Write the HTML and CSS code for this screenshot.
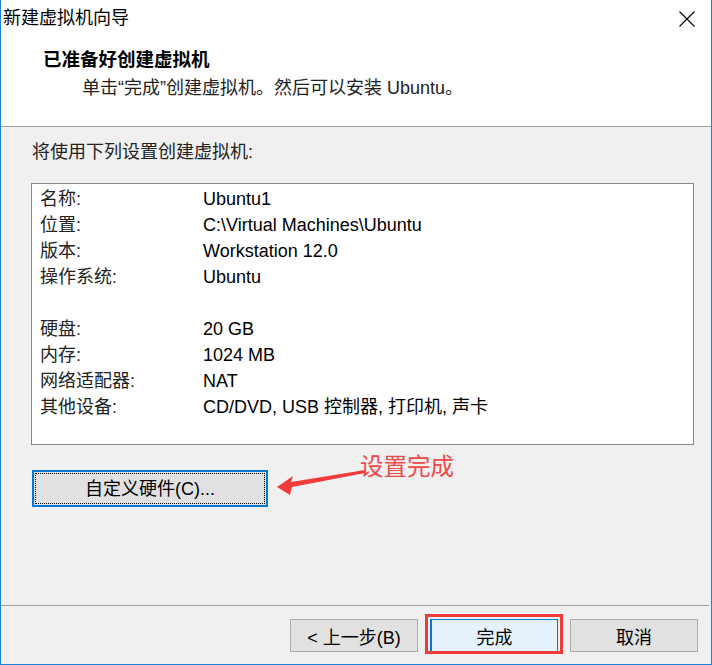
FILE: index.html
```html
<!DOCTYPE html>
<html lang="zh-CN">
<head>
<meta charset="utf-8">
<title>新建虚拟机向导</title>
<link rel="stylesheet" href="styles.css">
</head>
<body>
<div class="window">
  <div class="titlebar">
    <span class="title">新建虚拟机向导</span>
    <svg class="close" width="16" height="16" viewBox="0 0 16 16"><path d="M0.5 0.5 L15.5 15.5 M15.5 0.5 L0.5 15.5" stroke="#000" stroke-width="1.1" fill="none"/></svg>
  </div>
  <div class="header">
    <div class="heading">已准备好创建虚拟机</div>
    <div class="subtitle">单击“完成”创建虚拟机。然后可以安装 Ubuntu。</div>
  </div>
  <div class="body">
    <div class="intro">将使用下列设置创建虚拟机:</div>
    <div class="list">
      <div class="row"><span>名称:</span><span>Ubuntu1</span></div>
      <div class="row"><span>位置:</span><span>C:\Virtual Machines\Ubuntu</span></div>
      <div class="row"><span>版本:</span><span>Workstation 12.0</span></div>
      <div class="row"><span>操作系统:</span><span>Ubuntu</span></div>
      <div class="row"><span></span><span></span></div>
      <div class="row"><span>硬盘:</span><span>20 GB</span></div>
      <div class="row"><span>内存:</span><span>1024 MB</span></div>
      <div class="row"><span>网络适配器:</span><span>NAT</span></div>
      <div class="row"><span>其他设备:</span><span>CD/DVD, USB 控制器, 打印机, 声卡</span></div>
    </div>
    <div class="custom-wrap">
      <button class="btn custom">自定义硬件(C)...</button>
      <div class="annotation">
        <svg class="arrow" width="95" height="35" viewBox="0 0 95 35">
          <polygon points="3,22 19,11 17,17 91,5 91,8 18,22 16,30" fill="#f23b3b"/>
        </svg>
        <span class="note">设置完成</span>
      </div>
    </div>
  </div>
  <div class="footer">
    <button class="btn">&lt; 上一步(B)</button>
    <div class="finish-wrap">
      <button class="btn primary">完成</button>
    </div>
    <button class="btn">取消</button>
  </div>
</div>
</body>
</html>
```
FILE: styles.css
```css
* { box-sizing: border-box; }
html, body { margin: 0; padding: 0; background: #fff; }
body {
  font-family: "Liberation Sans", "Noto Sans CJK SC", sans-serif;
  font-size: 18px;
  color: #000;
}
.window {
  width: 712px;
  height: 665px;
  border: 1px solid #1883d7;
  border-top: none;
  display: flex;
  flex-direction: column;
  background: #f0f0f0;
  overflow: hidden;
}
.titlebar {
  height: 37px;
  background: #fff;
  display: flex;
  align-items: center;
  justify-content: space-between;
  padding-left: 2px;
  padding-right: 16px;
  padding-bottom: 1px;
}
.title { font-size: 18px; line-height: 24px; }
.close { display: block; margin-top: 1px; }
.header {
  height: 90px;
  background: #fff;
  border-bottom: 1px solid #a0a0a0;
  padding: 11px 0 0 42px;
}
.heading {
  font-weight: bold;
  font-size: 18.5px;
  line-height: 24px;
}
.subtitle {
  margin-top: 4px;
  margin-left: 39px;
  line-height: 24px;
  color: #222;
}
.body {
  flex: 1;
  padding: 0 17px 0 30px;
}
.intro {
  margin-top: 13px;
  margin-left: 1px;
  line-height: 24px;
  color: #222;
}
.list {
  margin-top: 19px;
  height: 262px;
  background: #fff;
  border: 1px solid #828790;
  padding: 2px 0 0 8px;
}
.row {
  display: grid;
  grid-template-columns: 163px 1fr;
  height: 26px;
  line-height: 26px;
}
.row span:first-child { color: #222; }
.custom-wrap {
  position: relative;
  margin-top: 25px;
  margin-left: 1px;
}
.btn {
  font-family: inherit;
  font-size: 18px;
  color: #000;
  background: #e1e1e1;
  border: 1px solid #adadad;
  width: 128px;
  height: 33px;
  padding: 0;
  margin: 0;
  cursor: default;
}
.custom {
  position: relative;
  width: 236px;
  height: 37px;
  border: 2px solid #0078d7;
  padding-bottom: 3px;
}
.custom::after {
  content: "";
  position: absolute;
  inset: 1px;
  border: 1px dotted #000;
}
.annotation {
  position: absolute;
  left: 240px;
  top: -15px;
  width: 240px;
  height: 40px;
}
.arrow {
  position: absolute;
  left: 2px;
  top: 10px;
}
.note {
  position: absolute;
  left: 88px;
  top: -2px;
  font-size: 23.5px;
  line-height: 28px;
  color: #f24848;
}
.footer {
  height: 59px;
  border-top: 1px solid #a0a0a0;
  margin-right: 2px;
  display: flex;
  justify-content: flex-end;
  align-items: flex-start;
  gap: 12px;
  padding: 13px 11px 0 0;
}
.finish-wrap { position: relative; }
.finish-wrap::after {
  content: "";
  position: absolute;
  left: -5px;
  top: -5px;
  right: -5px;
  bottom: -2px;
  border: 3px solid #f03a3a;
}
.primary {
  display: block;
  background: #e5f1fb;
  border: 1px solid #0078d7;
  border-left-width: 2px;
}
```
